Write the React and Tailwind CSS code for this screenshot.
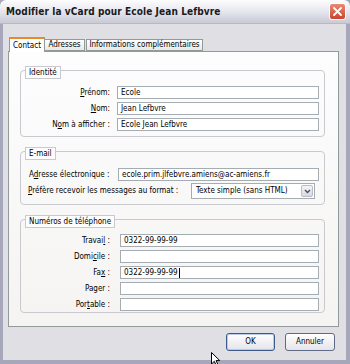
import React from 'react';

const font = "font-['DejaVu_Sans',sans-serif] [font-stretch:condensed]";

const Key = ({ children }) => <u className="underline underline-offset-[1px]">{children}</u>;

const Field = ({ value, caret, className = '' }) => (
  <div className={`h-[13px] border border-[#a5acb2] bg-white flex items-center pl-[3px] text-[8px] leading-none text-black ${className}`}>
    {value}
    {caret && <span className="ml-px w-px h-[10px] bg-black" />}
  </div>
);

const Group = ({ title, className = '', children }) => (
  <div className={`border border-[#c9c9cf] rounded-[4px] ${className}`}>
    <div className="-mt-[5px] ml-[4px] w-fit h-[13px] px-[3px] border border-[#c9c9cf] bg-[#fdfdfd] text-[8px] leading-none flex items-center">
      {title}
    </div>
    {children}
  </div>
);

const Row = ({ label, value, caret, labelW = 'w-[89px]', gap = 'ml-[7px]', inputW = 'w-[202px]' }) => (
  <div className="flex items-center">
    <div className={`${labelW} text-right text-[8px] leading-none whitespace-nowrap`}>{label}</div>
    <Field value={value} caret={caret} className={`${gap} ${inputW}`} />
  </div>
);

const App = () => {
  return (
    <div className={`relative w-[350px] h-[364px] flex flex-col bg-[#a7a7bc] text-black ${font}`}>
      {/* Title bar */}
      <div className="h-[24px] flex items-center pl-[6px] pr-[4px] rounded-t-[6px] bg-gradient-to-b from-[#fdfdfe] via-[#e6e6ee] to-[#cacad6] border-b border-[#b8b8c8]">
        <span className="text-[10px] font-bold tracking-[0.1px] text-[#1a1a1a]">Modifier la vCard pour Ecole Jean Lefbvre</span>
        <div className="ml-auto w-[17px] h-[17px] rounded-[3px] border border-white bg-gradient-to-b from-[#e98a72] to-[#c8442e] flex items-center justify-center">
          <svg width="11" height="11" viewBox="0 0 11 11">
            <path d="M2 2 L9 9 M9 2 L2 9" stroke="white" strokeWidth="1.8" strokeLinecap="round" />
          </svg>
        </div>
      </div>

      {/* Body */}
      <div className="flex-1 ml-[3px] mr-[4px] mb-[4px] bg-[#e0dfe3] flex flex-col pt-[13px]">
        {/* Tabs */}
        <div className="flex items-end h-[14px] pl-[6px] relative z-10">
          <div className="w-[36px] h-[15px] -mb-px border border-b-0 border-[#919b9c] border-t-[#e68b2c] border-t-2 bg-white text-[8px] leading-none flex items-center justify-center">
            Contact
          </div>
          <div className="w-[40px] h-[12px] border border-l-0 border-[#919b9c] bg-gradient-to-b from-white to-[#e8e8e4] text-[8px] leading-none flex items-center justify-center">
            Adresses
          </div>
          <div className="w-[117px] h-[12px] ml-px border border-[#919b9c] bg-gradient-to-b from-white to-[#e8e8e4] text-[8px] leading-none flex items-center justify-center whitespace-nowrap">
            Informations complémentaires
          </div>
        </div>

        {/* Panel */}
        <div className="ml-[5px] w-[331px] h-[276px] border border-[#919b9c] bg-gradient-to-b from-[#fdfdfe] to-[#f5f4f2] pl-[11px] pr-[13px] pt-[18px]">
          <Group title="Identité">
            <div className="mt-[7px] flex flex-col gap-[3px] pb-[5px]">
              <Row label={<><Key>P</Key>rénom:</>} value="Ecole" />
              <Row label={<><Key>N</Key>om:</>} value="Jean Lefbvre" />
              <Row label={<>N<Key>o</Key>m à afficher :</>} value="Ecole Jean Lefbvre" />
            </div>
          </Group>

          <Group title="E-mail" className="mt-[14px]">
            <div className="mt-[8px] flex items-center pl-[8px] pr-[5px]">
              <span className="text-[8px] leading-none whitespace-nowrap">A<Key>d</Key>resse électronique :</span>
              <Field value="ecole.prim.jlfebvre.amiens@ac-amiens.fr" className="ml-auto w-[201px]" />
            </div>
            <div className="mt-[2px] mb-[5px] flex items-center pl-[7px] pr-[9px]">
              <span className="text-[8px] leading-none whitespace-nowrap"><Key>P</Key>réfère recevoir les messages au format :</span>
              <div className="ml-auto w-[124px] h-[16px] border border-[#a5acb2] bg-white flex items-center text-[8px] leading-none">
                <span className="pl-[4px]">Texte simple (sans HTML)</span>
                <div className="ml-auto mr-px w-[12px] h-[12px] rounded-[2px] border border-[#b8bccb] bg-gradient-to-b from-[#f4f4f8] to-[#d8d8e2] flex items-center justify-center">
                  <svg width="7" height="5" viewBox="0 0 7 5">
                    <path d="M1 1 L3.5 3.5 L6 1" stroke="#4d4d60" strokeWidth="1.4" fill="none" />
                  </svg>
                </div>
              </div>
            </div>
          </Group>

          <Group title="Numéros de téléphone" className="mt-[14px]">
            <div className="mt-[6px] flex flex-col gap-[3px] pb-px">
              <Row gap="ml-[10px]" inputW="w-[199px]" label={<>Travai<Key>l</Key> :</>} value="0322-99-99-99" />
              <Row gap="ml-[10px]" inputW="w-[199px]" label={<>Domi<Key>c</Key>ile :</>} value="" />
              <Row gap="ml-[10px]" inputW="w-[199px]" label={<>Fa<Key>x</Key> :</>} value="0322-99-99-99" caret />
              <Row gap="ml-[10px]" inputW="w-[199px]" label="Pager :" value="" />
              <Row gap="ml-[10px]" inputW="w-[199px]" label={<>Por<Key>t</Key>able :</>} value="" />
            </div>
          </Group>
        </div>

        {/* Buttons */}
        <div className="mt-[6px] flex justify-end gap-[10px] pr-[11px]">
          <button className="w-[49px] h-[18px] rounded-[3px] border border-[#3d5a8c] bg-gradient-to-b from-white to-[#e4e4ea] shadow-[inset_0_0_0_1px_#b9cbe8] text-[8px] leading-none">
            OK
          </button>
          <button className="w-[50px] h-[18px] rounded-[3px] border border-[#5f6b86] bg-gradient-to-b from-white to-[#e4e4ea] text-[8px] leading-none">
            Annuler
          </button>
        </div>
      </div>

      {/* Mouse pointer */}
      <svg className="absolute left-[211px] top-[352px]" width="10" height="14" viewBox="0 0 10 14">
        <path d="M0.5 0.5 L0.5 12 L3.3 9.3 L5.3 13.5 L7 12.7 L5 8.6 L8.8 8.6 Z" fill="white" stroke="black" strokeWidth="1" />
      </svg>
    </div>
  );
};

export default App;
